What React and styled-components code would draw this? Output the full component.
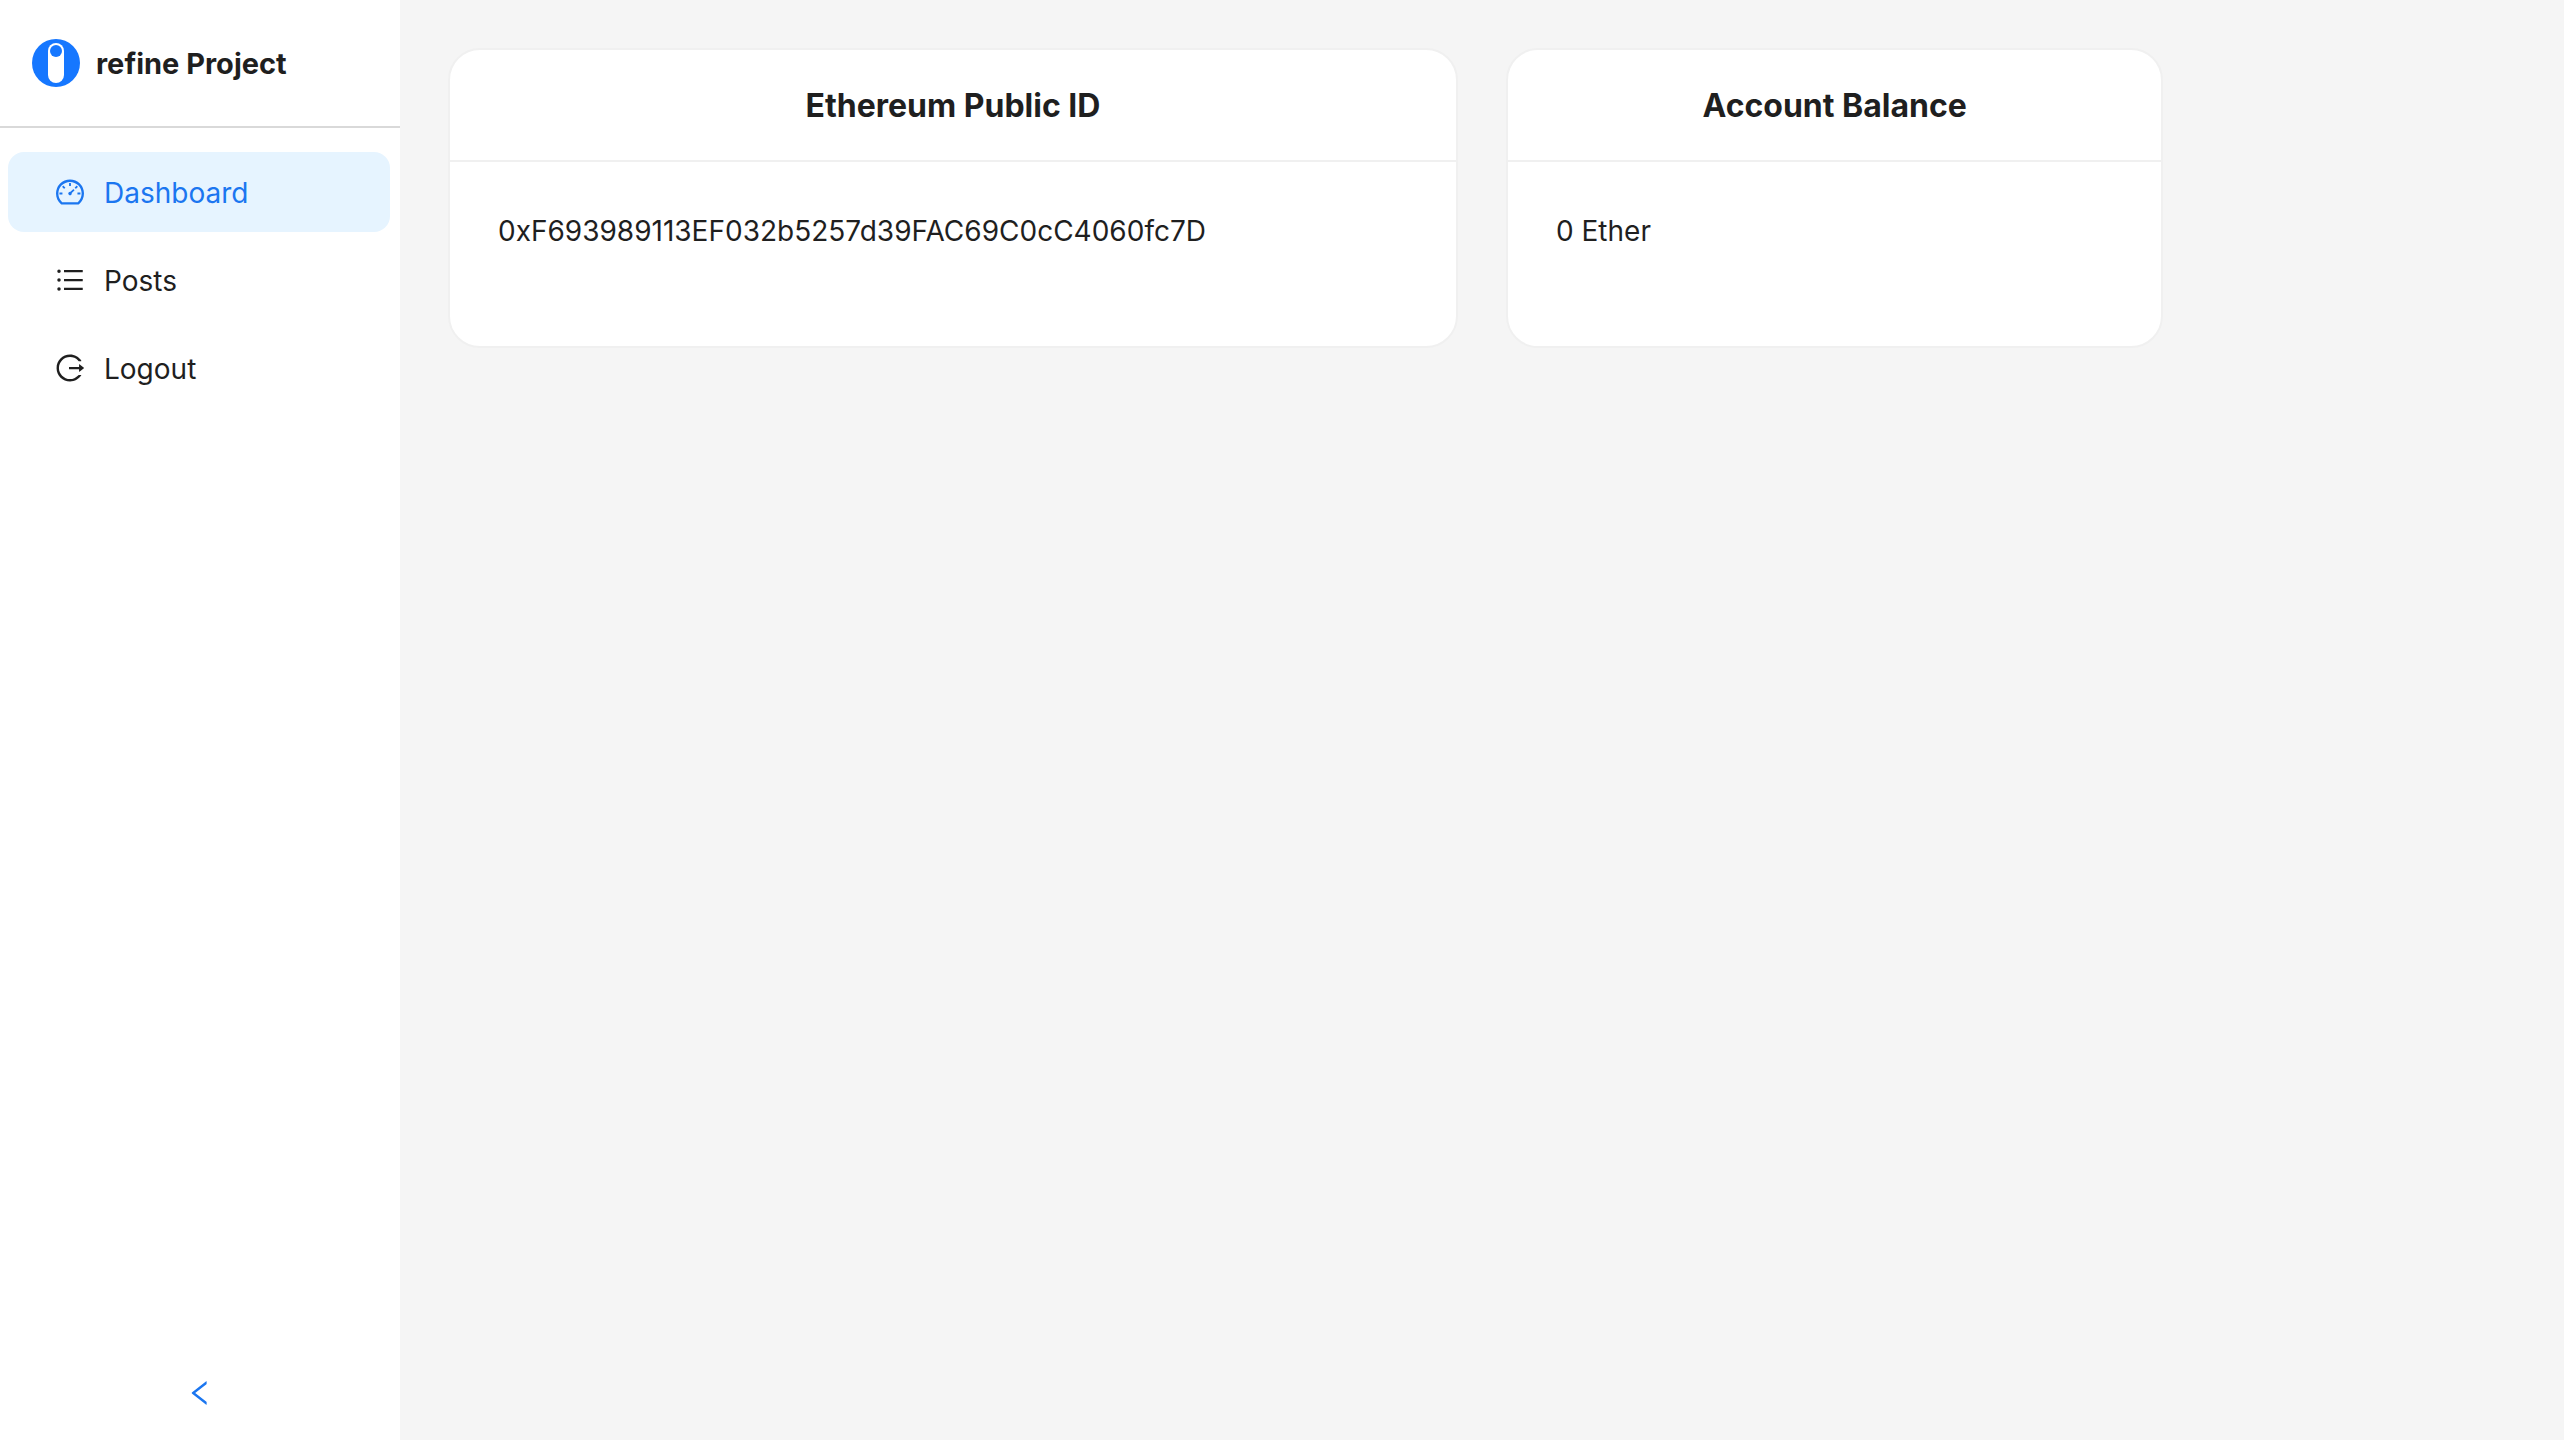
import styled, { createGlobalStyle } from "styled-components"
import {
    AiOutlineDashboard,
    AiOutlineUnorderedList,
    AiOutlineLogout,
    AiOutlineLeft
} from "react-icons/ai"

const menuItems = [
    { id: 'dashboard', title: 'Dashboard', icon: <AiOutlineDashboard />, link: '#dashboard' },
    { id: 'posts', title: 'Posts', icon: <AiOutlineUnorderedList />, link: '#posts' },
    { id: 'logout', title: 'Logout', icon: <AiOutlineLogout />, link: '#logout' },
]

export default function App(){
    return (
        <>
            <GlobalStyle />
            <AppStyled>
                <Sidebar active={'dashboard'} />
                <Dashboard />
            </AppStyled>
        </>
    )
}

function Sidebar({ active }){
    return (
        <SidebarStyled>
            <Brand href="#home">
                <Logo />
                <span>refine Project</span>
            </Brand>
            <Menu>
                {menuItems.map((item) => (
                    <li key={item.id}>
                        <MenuLink
                            href={item.link}
                            $active={item.id === active}
                            aria-current={item.id === active ? 'page' : undefined}
                        >
                            {item.icon}
                            <span>{item.title}</span>
                        </MenuLink>
                    </li>
                ))}
            </Menu>
            <CollapseButton type="button" aria-label="Collapse sidebar">
                <AiOutlineLeft />
            </CollapseButton>
        </SidebarStyled>
    )
}

function Logo(){
    return (
        <svg width="48" height="48" viewBox="0 0 48 48" aria-hidden="true">
            <circle cx="24" cy="24" r="24" fill="#1677ff" />
            <rect x="16" y="4" width="16" height="40" rx="8" fill="#fff" />
            <circle cx="24" cy="12" r="6" fill="#1677ff" />
        </svg>
    )
}

function Dashboard(){
    return (
        <Content>
            <Card $span={3}>
                <h2>Ethereum Public ID</h2>
                <div className="card-body">
                    <p>0xF693989113EF032b5257d39FAC69C0cC4060fc7D</p>
                </div>
            </Card>
            <Card $span={2}>
                <h2>Account Balance</h2>
                <div className="card-body">
                    <p>0 Ether</p>
                </div>
            </Card>
        </Content>
    )
}

const GlobalStyle = createGlobalStyle`
    *{
        margin: 0;
        padding: 0;
        box-sizing: border-box;
    }
    body{
        font-family: Inter, "Liberation Sans", sans-serif;
        font-size: 28px;
        line-height: 42px;
        color: #1f1f1f;
        background: #f5f5f5;
    }
`

const AppStyled = styled.div`
    display: flex;
    min-height: 100vh;
`

const SidebarStyled = styled.aside`
    display: flex;
    flex-direction: column;
    flex: 0 0 400px;
    background: #fff;
    span{
        padding-top: 2px;
    }
`

const Brand = styled.a`
    display: flex;
    align-items: center;
    gap: 16px;
    height: 128px;
    padding: 0 32px;
    border-bottom: 2px solid #d9d9d9;
    color: inherit;
    font-size: 29px;
    font-weight: 700;
    text-decoration: none;
`

const Menu = styled.ul`
    display: flex;
    flex-direction: column;
    gap: 8px;
    flex: 1;
    padding: 24px 10px 0 8px;
    list-style: none;
`

const MenuLink = styled.a`
    display: flex;
    align-items: center;
    gap: 18px;
    height: 80px;
    padding: 0 46px;
    border-radius: 16px;
    text-decoration: none;
    color: ${({ $active }) => ($active ? '#1b76f0' : 'inherit')};
    background: ${({ $active }) => ($active ? '#e6f4ff' : 'transparent')};
    svg{
        flex-shrink: 0;
        font-size: 32px;
    }
`

const CollapseButton = styled.button`
    display: flex;
    align-items: center;
    justify-content: center;
    height: 94px;
    border: none;
    background: #fff;
    color: #1b76f0;
    font-size: 32px;
    cursor: pointer;
`

const Content = styled.main`
    flex: 1;
    display: grid;
    grid-template-columns: repeat(6, minmax(0, 1fr));
    align-content: start;
    gap: 48px;
    padding: 48px;
`

const Card = styled.section`
    grid-column: span ${({ $span }) => $span};
    border: 2px solid #f0f0f0;
    border-radius: 32px;
    background: #fff;
    h2{
        padding: 32px 48px 30px;
        border-bottom: 2px solid #f0f0f0;
        font-size: 32px;
        line-height: 48px;
        font-weight: 700;
        text-align: center;
    }
    .card-body{
        min-height: 184px;
        padding: 48px;
    }
`
